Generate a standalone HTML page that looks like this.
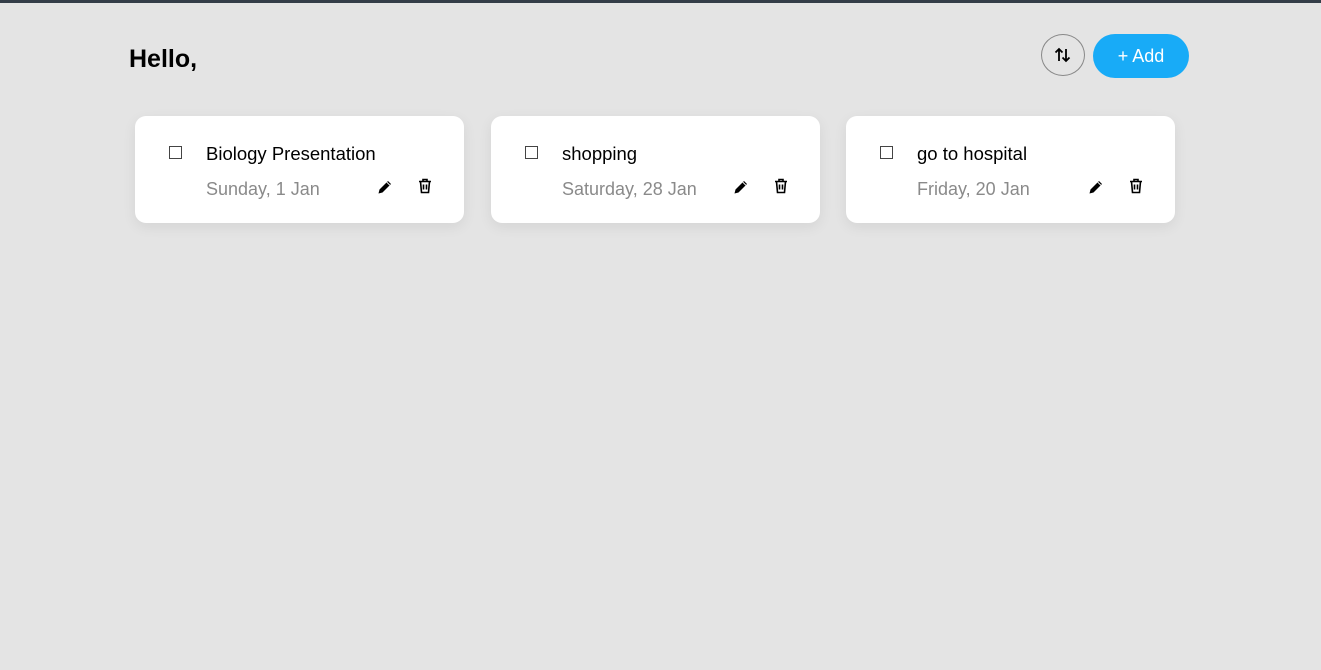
<!DOCTYPE html>
<html><head><style>
body{margin:0;width:1321px;height:670px;background:#e4e4e4;font-family:"Liberation Sans",sans-serif;position:relative;overflow:hidden}
.top{position:absolute;left:0;top:0;width:1321px;height:3px;background:#343d48}
h1{position:absolute;left:129px;top:45px;margin:0;font-size:25px;font-weight:bold;color:#000}
.sort{position:absolute;left:1041px;top:34px;width:42px;height:40px;border:1px solid #888;border-radius:50%;display:flex;align-items:center;justify-content:center}
.add{position:absolute;left:1093px;top:34px;width:96px;height:44px;border-radius:22px;background:#18abf7;color:#fff;font-size:18px;display:flex;align-items:center;justify-content:center}
.card{position:absolute;top:116px;width:329px;height:107px;background:#fff;border-radius:11px;box-shadow:0 4px 14px rgba(0,0,0,.07)}
.cb{position:absolute;left:34px;top:30px;width:11px;height:11px;border:1px solid #444}
.t{position:absolute;left:71px;top:27px;font-size:18.5px;color:#000}
.d{position:absolute;left:71px;top:63px;font-size:18px;color:#8a8a8a}
.e{position:absolute;left:242px;top:63px}
.r{position:absolute;left:283px;top:62px}
</style></head><body>
<div class="top"></div>
<h1>Hello,</h1>
<div class="sort"><svg width="18" height="16" viewBox="0 0 18 16" fill="none" stroke="#000" stroke-width="1.8"><path d="M5 14V2M1.5 5.5L5 2l3.5 3.5M12 2v12M8.5 10.5L12 14l3.5-3.5"/></svg></div>
<div class="add">+ Add</div>

<div class="card" style="left:135px"><div class="cb"></div><div class="t">Biology Presentation</div><div class="d">Sunday, 1 Jan</div>
<svg class="e" width="16" height="16" viewBox="0 0 16 16"><path d="M1.5 14.5l1-4 8.5-8.5 3 3-8.5 8.5z" fill="#000"/><path d="M9.8 3.2l3 3" stroke="#fff" stroke-width="1"/></svg>
<svg class="r" width="14" height="16" viewBox="0 0 14 16" fill="none" stroke="#000" stroke-width="1.6"><path d="M1 3.5h12M5 3.5V1.5h4v2M2.5 3.5l1 11h7l1-11M5.5 6.5v5M8.5 6.5v5"/></svg></div>

<div class="card" style="left:491px"><div class="cb"></div><div class="t">shopping</div><div class="d">Saturday, 28 Jan</div>
<svg class="e" width="16" height="16" viewBox="0 0 16 16"><path d="M1.5 14.5l1-4 8.5-8.5 3 3-8.5 8.5z" fill="#000"/><path d="M9.8 3.2l3 3" stroke="#fff" stroke-width="1"/></svg>
<svg class="r" width="14" height="16" viewBox="0 0 14 16" fill="none" stroke="#000" stroke-width="1.6"><path d="M1 3.5h12M5 3.5V1.5h4v2M2.5 3.5l1 11h7l1-11M5.5 6.5v5M8.5 6.5v5"/></svg></div>

<div class="card" style="left:846px"><div class="cb"></div><div class="t">go to hospital</div><div class="d">Friday, 20 Jan</div>
<svg class="e" width="16" height="16" viewBox="0 0 16 16"><path d="M1.5 14.5l1-4 8.5-8.5 3 3-8.5 8.5z" fill="#000"/><path d="M9.8 3.2l3 3" stroke="#fff" stroke-width="1"/></svg>
<svg class="r" width="14" height="16" viewBox="0 0 14 16" fill="none" stroke="#000" stroke-width="1.6"><path d="M1 3.5h12M5 3.5V1.5h4v2M2.5 3.5l1 11h7l1-11M5.5 6.5v5M8.5 6.5v5"/></svg></div>
</body></html>
